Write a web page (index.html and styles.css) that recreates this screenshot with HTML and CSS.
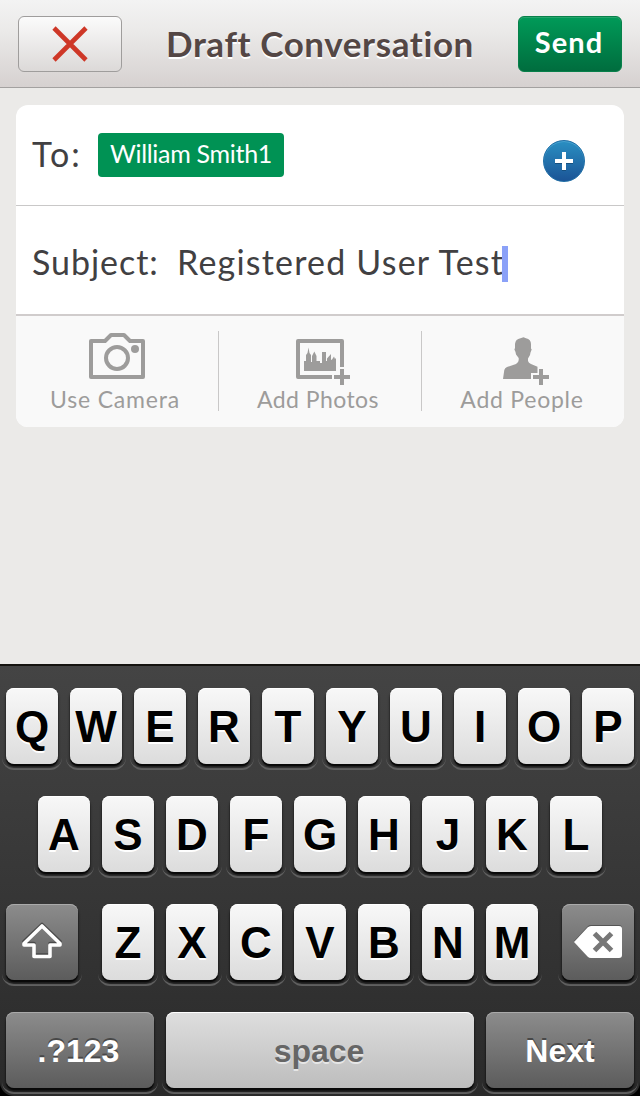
FILE: index.html
```html
<!DOCTYPE html>
<html lang="en">
<head>
<meta charset="utf-8">
<title>Draft Conversation</title>
<link rel="stylesheet" href="styles.css">
</head>
<body>
<div class="screen">
  <header class="navbar">
    <button class="btn btn-cancel" aria-label="Cancel">
      <svg width="36" height="36" viewBox="0 0 36 36"><path d="M2 2 34 34M34 2 2 34" stroke="#ce3727" stroke-width="4.6"/></svg>
    </button>
    <h1 class="title">Draft Conversation</h1>
    <button class="btn btn-send">Send</button>
  </header>
  <main class="content">
    <section class="card">
      <div class="row row-to">
        <span class="label to-label">To:</span>
        <span class="chip">William Smith1</span>
        <button class="add" aria-label="Add recipient">
          <svg width="18" height="20" viewBox="0 0 18 20"><path d="M9 2v18M0 11h18" stroke="#17507f" stroke-width="4"/><path d="M9 1v18M0 10h18" stroke="#fff" stroke-width="4"/></svg>
        </button>
      </div>
      <div class="row row-subject">
        <span class="label subject-label">Subject:</span>
        <span class="label value">Registered User Test</span><span class="caret"></span>
      </div>
      <div class="tools">
        <div class="tool">
          <svg width="64" height="56" viewBox="85 331 64 56" fill="none" stroke="#9d9c9b" stroke-width="4" stroke-linejoin="round"><path d="M91 341h14l6-6h13l6 6h13v36H91z"/><circle cx="117" cy="358" r="11"/><circle cx="135" cy="349" r="4" fill="#9d9c9b" stroke="none"/></svg>
          <span class="tool-label camera">Use Camera</span>
        </div>
        <div class="tool">
          <svg width="64" height="56" viewBox="288 331 64 56"><path d="M332 377h-34v-36h44v26M342 369v16M334 377h16" fill="none" stroke="#9d9c9b" stroke-width="4" stroke-linejoin="round"/><path d="M304 371V361H306V355L307.500 353 308.500 347.500 309.500 353 311 355V362H312V356L314.300 351.500 316.500 356V361H320V363H322V352H326V361H327V358.500L331 354V360L332 359.500 334 356.500 335 359 336 358V371z" fill="#9d9c9b"/></svg>
          <span class="tool-label photos">Add Photos</span>
        </div>
        <div class="tool">
          <svg width="64" height="56" viewBox="491 331 64 56"><path d="M503 379L504.300 370Q504.800 368 507 367L516 364Q518.700 362.500 518.700 360V358L516 354.500 515.500 352 514.400 349.500 515 348V344Q515.500 339 520.500 338.200L523.500 337.200 526 338.200Q531 339.500 531 344V348.500L531.700 349.500 530.500 352.500 530 355 528 358.500V361Q528.500 363 531 364L537.500 366.700V373H531V379z" fill="#9d9c9b"/><path d="M541 369v16M533 377h16" stroke="#9d9c9b" stroke-width="4"/></svg>
          <span class="tool-label people">Add People</span>
        </div>
      </div>
    </section>
  </main>
  <section class="keyboard">
    <div class="keys"><span class="key">Q</span><span class="key">W</span><span class="key">E</span><span class="key">R</span><span class="key">T</span><span class="key">Y</span><span class="key">U</span><span class="key">I</span><span class="key">O</span><span class="key">P</span></div>
    <div class="keys"><span class="key">A</span><span class="key">S</span><span class="key">D</span><span class="key">F</span><span class="key">G</span><span class="key">H</span><span class="key">J</span><span class="key">K</span><span class="key">L</span></div>
    <div class="keys keys-split">
      <span class="key key-dark key-side"><svg width="44" height="40" viewBox="0 0 44 40" fill="none" stroke-linejoin="round" stroke-width="3.600"><path d="M22 2.500 4 19.500v2h10V33h16V21.500h10v-2z" stroke="#4a4a4a"/><path d="M22 4 4 21.500v1.500h10v11.500h16V23h10v-1.500z" stroke="#fff"/></svg></span>
      <div class="keys"><span class="key">Z</span><span class="key">X</span><span class="key">C</span><span class="key">V</span><span class="key">B</span><span class="key">N</span><span class="key">M</span></div>
      <span class="key key-dark key-side"><svg width="50" height="36" viewBox="0 0 50 36"><path d="M1 17 15 2q1-1 3-1h28q3 0 3 3v26q0 3-3 3H18q-2 0-3-1z" fill="#555"/><path d="M1 18 14.500 3.500Q16 2 18 2h28q3 0 3 3v26q0 3-3 3H18q-2 0-3.500-1.500z" fill="#fff"/><path d="M21.500 9.500l17 17M38.500 9.500l-17 17" stroke="#777" stroke-width="5"/></svg></span>
    </div>
    <div class="keys">
      <span class="key key-dark key-wide key-numbers">.?123</span>
      <span class="key key-space">space</span>
      <span class="key key-dark key-wide">Next</span>
    </div>
  </section>
</div>
</body>
</html>
```
FILE: styles.css
```css
* { box-sizing: border-box; }
body { margin: 0; background: #ebeae8; font-family: Lato, sans-serif; }
button { padding: 0; font: inherit; }
.screen { width: 640px; height: 1096px; display: flex; flex-direction: column; overflow: hidden; background: #000; }

.navbar { height: 88px; flex: none; display: flex; justify-content: space-between; padding: 16px 18px 0; border-bottom: 1px solid #a3a1a0; background: linear-gradient(#f3f3f3, #ebeae9 35%, #d6d1d0); }
.btn { width: 104px; height: 56px; border-radius: 6px; display: flex; justify-content: center; }
.btn-cancel { align-items: center; border: 1px solid #9f9d9c; background: linear-gradient(#fbfbfb, #dcd9d8); }
.btn-send { border: 1px solid #08804a; background: linear-gradient(#009a58, #006d3e); box-shadow: inset 0 1px #25a56c; color: #fff; font-weight: 700; font-size: 29px; line-height: 50px; letter-spacing: 1.1px; padding-right: 2px; }
.title { margin: 0; font-size: 35px; font-weight: 700; line-height: 54px; letter-spacing: .6px; color: #544745; text-shadow: 0 2px #fff; white-space: nowrap; }

.content { flex: 1; padding: 17px 16px; background: #ebeae8; }
.card { height: 322px; border-radius: 12px; background: #fff; overflow: hidden; }
.row { display: flex; align-items: flex-start; padding-left: 16px; }
.row-to { height: 101px; border-bottom: 1px solid #c9c8c8; }
.row-subject { height: 110px; border-bottom: 2px solid #d0cccc; }
.label { font-size: 34px; color: #414042; white-space: pre; line-height: 40px; }
.to-label { margin-top: 29px; width: 66px; letter-spacing: 2px; }
.chip { margin-top: 28px; width: 186px; height: 44px; border-radius: 4px; background: #009254; color: #fff; font-size: 25px; line-height: 40px; letter-spacing: -.3px; text-align: center; white-space: nowrap; }
.add { margin: 35px 39px 0 auto; width: 42px; height: 42px; border: 1px solid #1e6da5; border-radius: 50%; background: linear-gradient(#2a8fc2, #1b5496); box-shadow: inset 0 1px #4aa3d0; display: flex; align-items: center; justify-content: center; }
.subject-label { margin-top: 36px; width: 145px; letter-spacing: .95px; }
.value { margin-top: 36px; width: 326px; letter-spacing: 1.2px; }
.caret { margin-top: 40px; margin-left: -1px; width: 6px; height: 36px; background: #8ba1f8; }

.tools { height: 111px; display: grid; grid-template-columns: 202px 202px 202px; column-gap: 1px; background: #f9f9f9; padding-top: 15px; }
.tool { display: flex; flex-direction: column; align-items: center; height: 80px; box-shadow: 1px 0 #c9c8c8; }
.tool svg { flex: none; }
.tool:last-child { box-shadow: none; }
.tool-label { font-size: 23px; line-height: 25px; color: #9d9c9b; padding-right: 4px; white-space: nowrap; }
.camera { letter-spacing: .8px; }
.photos { letter-spacing: .45px; }
.people { letter-spacing: .75px; padding-right: 2px; }

.keyboard { height: 432px; flex: none; display: flex; flex-direction: column; gap: 32px; padding: 22px 6px 0; border-top: 2px solid #151310; border-radius: 0 0 14px 14px; background: linear-gradient(#444, #2a2a2a); font-family: "Liberation Sans", Arial, sans-serif; isolation: isolate; }
.keys { display: flex; justify-content: center; gap: 12px; }
.keys-split { justify-content: space-between; }
.key { position: relative; width: 52px; height: 76px; border-radius: 8px; background: linear-gradient(#f8f8f8, #dcdcdc); box-shadow: inset 0 1px #fff, 0 2px 1px #080808, 0 3px 3px rgba(0,0,0,.6); display: flex; align-items: center; justify-content: center; font-weight: 700; font-size: 44px; line-height: 74px; padding-top: 2px; color: #000; text-shadow: 0 2px #fff; }
.key::after { content: ""; position: absolute; z-index: -1; left: -4px; right: -4px; bottom: -6px; height: 24px; border-bottom: 2px solid #626262; border-radius: 0 0 12px 12px; }
.key-dark { background: linear-gradient(#8c8c8c, #5c5c5c); box-shadow: inset 0 1px #aaa, 0 2px 1px #080808, 0 3px 3px rgba(0,0,0,.6); color: #fff; text-shadow: 0 -2px #484848; font-size: 32px; }
.key-side { width: 72px; padding-top: 0; }
.key-wide { width: 148px; }
.key-numbers { padding-right: 3px; }
.key-space { width: 308px; padding-right: 2px; background: linear-gradient(#dedede, #bdbdbd); color: #666; text-shadow: 0 2px #e6e6e6; font-size: 32px; }
```
